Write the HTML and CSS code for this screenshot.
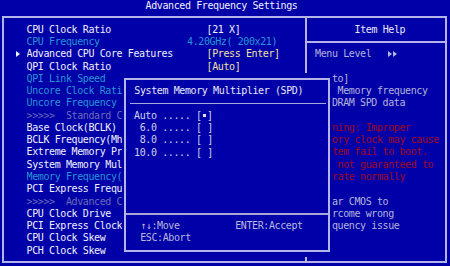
FILE: index.html
```html
<!DOCTYPE html>
<html>
<head>
<meta charset="utf-8">
<link rel="stylesheet" href="styles.css">
</head>
<body>
<div class="title">Advanced Frequency Settings</div>
<div class="frame">
  <div class="menu">
    <div class="row"><span class="mk"></span><span class="nm">CPU Clock Ratio</span><span class="val">[21 X]</span></div>
    <div class="row cyan"><span class="mk"></span><span class="nm">CPU Frequency</span><span class="val freq">4.20GHz( 200x21)</span></div>
    <div class="row"><span class="mk"><svg class="tri" viewBox="0 0 4 6"><polygon points="0,0 4,3 0,6"/></svg></span><span class="nm">Advanced CPU Core Features</span><span class="val yel">[Press Enter]</span></div>
    <div class="row"><span class="mk"></span><span class="nm">QPI Clock Ratio</span><span class="val yel">[Auto]</span></div>
    <div class="row cyan"><span class="mk"></span><span class="nm">QPI Link Speed</span></div>
    <div class="row cyan"><span class="mk"></span><span class="nm">Uncore Clock Ratio</span></div>
    <div class="row cyan"><span class="mk"></span><span class="nm">Uncore Frequency</span></div>
    <div class="row dim"><span class="mk"></span><span class="nm">&gt;&gt;&gt;&gt;&gt;  Standard Clock Control</span></div>
    <div class="row"><span class="mk"></span><span class="nm">Base Clock(BCLK) Control</span></div>
    <div class="row"><span class="mk"></span><span class="nm">BCLK Frequency(Mhz)</span></div>
    <div class="row"><span class="mk"></span><span class="nm">Extreme Memory Profile(X.M.P.)</span></div>
    <div class="row"><span class="mk"></span><span class="nm">System Memory Multiplier (SPD)</span></div>
    <div class="row cyan"><span class="mk"></span><span class="nm">Memory Frequency(Mhz)</span></div>
    <div class="row"><span class="mk"></span><span class="nm">PCI Express Frequency(Mhz)</span></div>
    <div class="row dim"><span class="mk"></span><span class="nm">&gt;&gt;&gt;&gt;&gt;  Advanced Clock Control</span></div>
    <div class="row"><span class="mk"></span><span class="nm">CPU Clock Drive</span></div>
    <div class="row"><span class="mk"></span><span class="nm">PCI Express Clock Drive</span></div>
    <div class="row"><span class="mk"></span><span class="nm">CPU Clock Skew</span></div>
    <div class="row"><span class="mk"></span><span class="nm">PCH Clock Skew</span></div>
  </div>
  <div class="help">
    <div class="line head">Item Help</div>
    <div class="rule"></div>
    <div class="line grey">Menu Level   <svg class="lvl" viewBox="0 0 9 6"><polygon points="0,0 4,3 0,6"/><polygon points="5,0 9,3 5,6"/></svg></div>
    <div class="line"></div>
    <div class="line grey">[Auto]</div>
    <div class="line grey">Set Memory frequency</div>
    <div class="line grey">by DRAM SPD data</div>
    <div class="line"></div>
    <div class="line red">Warning: Improper</div>
    <div class="line red">memory clock may cause</div>
    <div class="line red">system fail to boot.</div>
    <div class="line red">May not guaranteed to</div>
    <div class="line red">operate normally</div>
    <div class="line"></div>
    <div class="line grey">Clear CMOS to</div>
    <div class="line grey">overcome wrong</div>
    <div class="line grey">frequency issue</div>
  </div>
</div>
<div class="popup">
  <div class="pbox">
    <div class="pline ptitle">System Memory Multiplier (SPD)</div>
    <div class="psep"></div>
    <div class="pline opt">Auto ..... [<span class="sq"></span>]</div>
    <div class="pline opt"> 6.0 ..... [ ]</div>
    <div class="pline opt"> 8.0 ..... [ ]</div>
    <div class="pline opt">10.0 ..... [ ]</div>
    <div class="pspace"></div>
    <div class="psep full"></div>
    <div class="pline keys"><span>↑↓:Move</span><span>ENTER:Accept</span></div>
    <div class="pline keys"><span>ESC:Abort</span></div>
  </div>
</div>
</body>
</html>
```
FILE: styles.css
```css
html, body {
  margin: 0;
  padding: 0;
}
body {
  width: 450px;
  height: 266px;
  overflow: hidden;
  background: #0000a8;
  color: #f0f0ff;
  font-family: "DejaVu Sans Mono", "Liberation Mono", monospace;
  font-size: 10px;
  letter-spacing: -0.395px;
  position: relative;
}
.title {
  height: 11px;
  line-height: 11px;
  text-align: center;
  padding-right: 7px;
  white-space: pre;
}
.frame {
  box-sizing: border-box;
  margin: 5px 0 0 2px;
  width: 445px;
  height: 247px;
  border: 2px solid #b4b4e8;
  display: grid;
  grid-template-columns: 301px 1fr;
}
.menu {
  padding-top: 5.84px;
}
.row {
  height: 12.28px;
  line-height: 12.28px;
  display: flex;
  white-space: pre;
}
.mk {
  width: 22.5px;
  flex: none;
  display: flex;
  align-items: center;
}
.tri {
  width: 4px;
  height: 6px;
  margin-left: 12px;
  fill: #f0f0ff;
}
.nm {
  width: 180px;
  flex: none;
  overflow: hidden;
}
.val { flex: none; }
.freq { margin-left: -19.5px; color: #2896d4; }
.yel { color: #f0e0a0; }
.cyan { color: #2896d4; }
.dim { color: #6c6cb8; }
.help {
  border-left: 2px solid #b4b4e8;
  padding-top: 5.84px;
}
.line {
  height: 12.28px;
  line-height: 12.28px;
  padding-left: 8px;
  white-space: pre;
  display: flex;
  align-items: center;
}
.head {
  padding-left: 47.5px;
  color: #e8e8f8;
}
.grey { color: #b4b4dc; }
.red { color: #a4001c; }
.lvl {
  width: 9px;
  height: 6px;
  fill: #b4b4dc;
}
.rule {
  height: 12.28px;
  display: flex;
  align-items: center;
}
.rule::before {
  content: "";
  flex: 1;
  height: 2px;
  background: #b4b4e8;
}
.popup {
  position: absolute;
  left: 122px;
  top: 73px;
  width: 210px;
  height: 184px;
  box-sizing: border-box;
  padding: 5px 2px 5px 2px;
  background: #0000a8;
  display: flex;
}
.pbox {
  flex: 1;
  box-sizing: border-box;
  border: 2px solid #b4b4e8;
  padding-top: 5.26px;
  display: flex;
  flex-direction: column;
}
.pline {
  height: 12.28px;
  line-height: 12.28px;
  padding-left: 8px;
  white-space: pre;
  flex: none;
}
.ptitle { color: #e8e8f8; padding-left: 8.3px; }
.opt { color: #d0d0ec; }
.sq {
  display: inline-block;
  width: 3px;
  height: 3px;
  background: #e0e0f4;
  margin: 0 1.3px;
  vertical-align: 1.5px;
}
.psep {
  height: 12.28px;
  display: flex;
  align-items: center;
  margin: 0 2px 0 4px;
  flex: none;
}
.psep::before {
  content: "";
  flex: 1;
  height: 1px;
  background: #a8a8d8;
}
.psep.full { margin: 0; }
.psep.full::before { height: 2px; }
.pspace { height: 49.12px; flex: none; }
.keys {
  color: #b8b8dc;
  padding-left: 14.2px;
  display: grid;
  grid-template-columns: 95px auto;
}
```
